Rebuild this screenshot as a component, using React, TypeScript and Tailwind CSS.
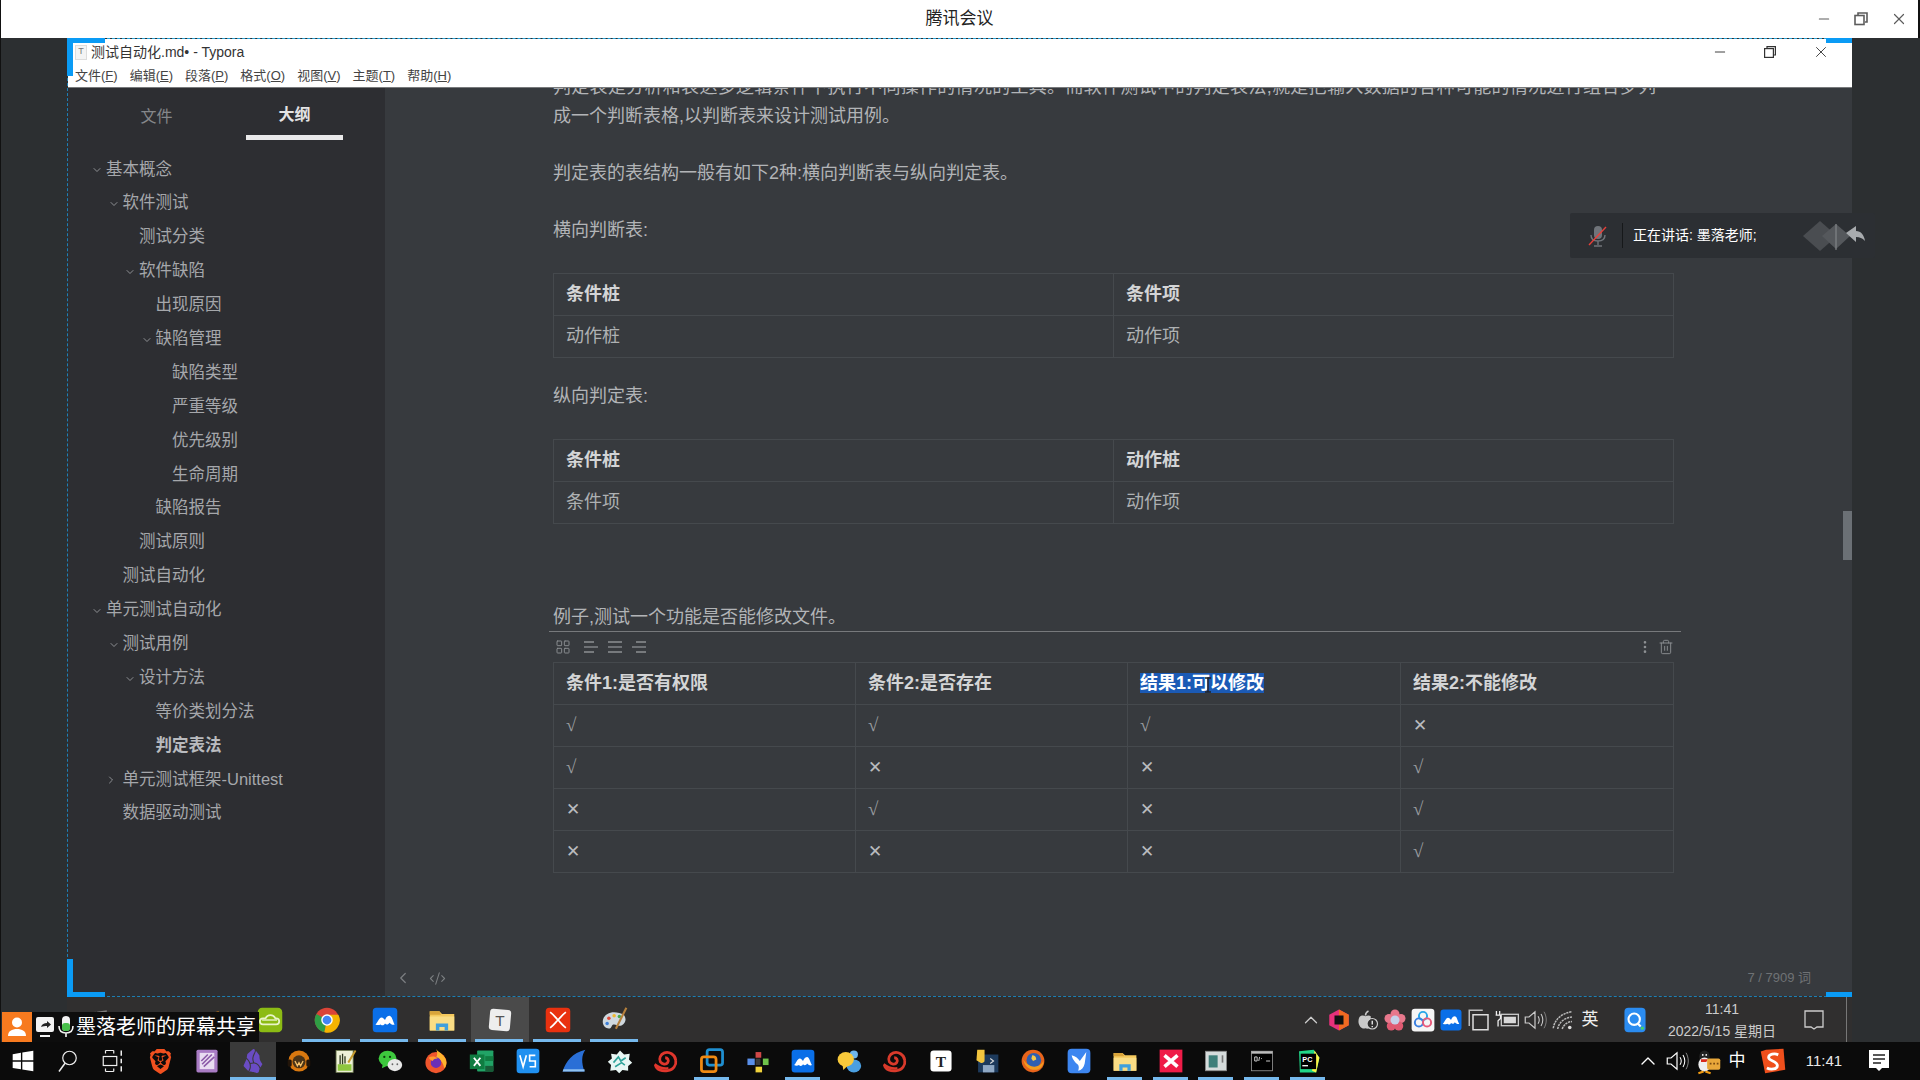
import { ChevronDown, ChevronLeft, ChevronRight, CodeXml, EllipsisVertical, LayoutGrid, Minus, Trash2, X } from 'lucide-react'
import { SiBrave, SiObsidian } from 'react-icons/si'
import type { ReactNode } from 'react'

const OUTLINE = [
  { label: '基本概念', level: 0, arrow: 'down' },
  { label: '软件测试', level: 1, arrow: 'down' },
  { label: '测试分类', level: 2 },
  { label: '软件缺陷', level: 2, arrow: 'down' },
  { label: '出现原因', level: 3 },
  { label: '缺陷管理', level: 3, arrow: 'down' },
  { label: '缺陷类型', level: 4 },
  { label: '严重等级', level: 4 },
  { label: '优先级别', level: 4 },
  { label: '生命周期', level: 4 },
  { label: '缺陷报告', level: 3 },
  { label: '测试原则', level: 2 },
  { label: '测试自动化', level: 1 },
  { label: '单元测试自动化', level: 0, arrow: 'down' },
  { label: '测试用例', level: 1, arrow: 'down' },
  { label: '设计方法', level: 2, arrow: 'down' },
  { label: '等价类划分法', level: 3 },
  { label: '判定表法', level: 3, active: true },
  { label: '单元测试框架-Unittest', level: 1, arrow: 'right' },
  { label: '数据驱动测试', level: 1 },
]

const MENU = [
  ['文件(', 'F', ')'],
  ['编辑(', 'E', ')'],
  ['段落(', 'P', ')'],
  ['格式(', 'O', ')'],
  ['视图(', 'V', ')'],
  ['主题(', 'T', ')'],
  ['帮助(', 'H', ')'],
]

const Svg = ({ size = 26, children }: { size?: number; children: ReactNode }) => (
  <svg width={size} height={size} viewBox="0 0 32 32" fill="none">
    {children}
  </svg>
)

const WinLogo = () => (
  <Svg size={22}>
    <path d="M1 6l12-2v11H1zM15 3.6L31 1v14H15zM1 17h12v11L1 26zM15 17h16v14l-16-2.6z" fill="#fff" />
  </Svg>
)
const SearchIcon = () => (
  <Svg size={24}>
    <circle cx="18" cy="12" r="9" stroke="#eee" strokeWidth="1.6" />
    <path d="M12 19L4 30" stroke="#eee" strokeWidth="2" />
  </Svg>
)
const TaskView = () => (
  <Svg size={24}>
    <path d="M6 2v4M17 2v4M6 26v4M17 26v4M6 2h11M6 30h11" stroke="#eee" strokeWidth="1.6" />
    <rect x="3" y="10" width="18" height="12" stroke="#eee" strokeWidth="1.6" />
    <path d="M27 2v7M27 13v6M27 23v7" stroke="#eee" strokeWidth="2" />
  </Svg>
)
const PurpleDoc = () => (
  <Svg>
    <rect x="3" y="2" width="26" height="28" rx="2" fill="#a97cc4" />
    <rect x="7" y="6" width="18" height="20" fill="#e9dcf1" />
    <path d="M10 20L22 8M12 23L25 11M9 16l8-8" stroke="#8c5aa8" strokeWidth="2" />
  </Svg>
)
const Headset = () => (
  <Svg>
    <circle cx="16" cy="16" r="13" fill="#d9780f" />
    <circle cx="16" cy="17" r="8" fill="#4a3418" />
    <path d="M11 16l3 6 2-4 2 4 3-6" stroke="#f6c26b" strokeWidth="1.6" />
    <rect x="2" y="14" width="5" height="9" rx="2" fill="#22150a" />
    <rect x="25" y="14" width="5" height="9" rx="2" fill="#22150a" />
  </Svg>
)
const Notepad = () => (
  <Svg>
    <rect x="5" y="3" width="21" height="27" fill="#eef2d8" stroke="#6e7a50" />
    <rect x="7" y="20" width="17" height="8" fill="#8ec63f" />
    <path d="M10 9v11M13 7v13M16 10v9" stroke="#2f3a20" strokeWidth="1.6" />
    <path d="M20 18L29 3" stroke="#c59a2d" strokeWidth="2.4" />
  </Svg>
)
const WeChat = () => (
  <Svg>
    <ellipse cx="13" cy="13" rx="11" ry="9.5" fill="#3dc83d" />
    <path d="M7 20l-1 5 6-3z" fill="#3dc83d" />
    <ellipse cx="22" cy="21" rx="9" ry="7.5" fill="#e8e8e8" />
    <circle cx="9" cy="11" r="1.4" fill="#0b3d0b" />
    <circle cx="16" cy="11" r="1.4" fill="#0b3d0b" />
    <circle cx="19" cy="20" r="1.1" fill="#666" />
    <circle cx="25" cy="20" r="1.1" fill="#666" />
  </Svg>
)
const Firefox = () => (
  <Svg>
    <circle cx="16" cy="18" r="13" fill="#f0562d" />
    <path d="M16 1c2 4 9 6 12 13 2 5 0 9-2 11-1-8-5-11-10-13 2-3 2-7 0-11z" fill="#ffb52e" />
    <circle cx="16" cy="18" r="6.5" fill="#6b2fb8" />
    <path d="M7 12c3-2 8-2 11 1-3 0-5 1-6 3-2-1-4-2-5-4z" fill="#ff9a2e" />
  </Svg>
)
const FirefoxOld = () => (
  <Svg>
    <circle cx="16" cy="16" r="14" fill="#e8641b" />
    <circle cx="17" cy="15" r="9" fill="#2f5fb0" />
    <path d="M4 14c2 10 10 15 19 12 4-2 6-6 6-10-4 7-12 9-18 5-3-2-5-4-7-7z" fill="#f29c1f" />
    <path d="M15 9c3 0 5 2 5 5l-4 2-2-3z" fill="#f7c948" />
  </Svg>
)
const Excel = () => (
  <Svg>
    <rect x="10" y="3" width="20" height="26" rx="1" fill="#21a366" />
    <rect x="20" y="10" width="10" height="6" fill="#107c41" />
    <rect x="20" y="22" width="10" height="7" fill="#185c37" />
    <rect x="1" y="8" width="18" height="18" fill="#107c41" />
    <path d="M6 12l8 10M14 12l-8 10" stroke="#fff" strokeWidth="2.2" />
  </Svg>
)
const VsBox = () => (
  <Svg>
    <rect x="2" y="1" width="28" height="30" rx="4" fill="#2090f0" />
    <path d="M6 9l4 14 4-14" stroke="#fff" strokeWidth="2" />
    <path d="M25 9h-7v7h7v7h-7" stroke="#fff" strokeWidth="2" />
  </Svg>
)
const Fin = () => (
  <Svg>
    <path d="M2 29C6 16 14 6 30 2c-5 7-5 16-1 27z" fill="#2a6fd6" />
    <path d="M2 29h27v-3H3z" fill="#8fc1f0" />
  </Svg>
)
const Flower = () => (
  <Svg>
    <path d="M16 3l5 5 7-1-1 7 4 4-5 4 0 6-7-1-4 4-4-4-7 1 1-7-4-4 5-4-1-6 7 1z" fill="#e8f6f4" />
    <path d="M8 18l6-7 3 5 6-4M10 23l8-5 4 3" stroke="#2fa39a" strokeWidth="2" />
  </Svg>
)
const Snail = ({ color = '#e0362c' }: { color?: string }) => (
  <Svg>
    <path d="M3 21c1 6 8 8 15 7 7-1 11-7 10-13C27 8 20 4 14 6c-5 2-7 7-5 11 2 3 7 4 9 1 2-3 0-6-3-6" stroke={color} strokeWidth="3.4" />
    <path d="M2 20c5 4 11 6 17 5" stroke={color} strokeWidth="3" />
  </Svg>
)
const Vmware = () => (
  <Svg>
    <rect x="10" y="2" width="19" height="19" rx="3" stroke="#1f8fd0" strokeWidth="3.4" />
    <rect x="3" y="11" width="18" height="18" rx="3" stroke="#f08a12" strokeWidth="3.4" />
  </Svg>
)
const Pieces = () => (
  <Svg>
    <rect x="3" y="13" width="9" height="8" fill="#5a8fe8" />
    <rect x="13" y="5" width="7" height="7" fill="#d04848" />
    <rect x="22" y="13" width="7" height="8" fill="#6fc24a" />
    <rect x="13" y="23" width="8" height="7" fill="#f0d23c" />
    <path d="M13 13l6 0 0 8-6 0z" fill="#3a3a3a" />
  </Svg>
)
const Bubbles = () => (
  <Svg>
    <circle cx="22" cy="8" r="5" fill="#6fb6ea" />
    <ellipse cx="22" cy="22" rx="9" ry="8" fill="#4a9fe0" />
    <ellipse cx="12" cy="14" rx="10" ry="9" fill="#f8c93a" />
    <path d="M8 21l1 6 5-5z" fill="#f8c93a" />
  </Svg>
)
const PyDisk = () => (
  <Svg>
    <rect x="5" y="8" width="25" height="22" fill="#1d3a5c" />
    <rect x="11" y="21" width="14" height="9" fill="#8fa8c4" />
    <path d="M4 2h9v13c0 3-3 4-5 3L3 15z" fill="#f2c53d" />
    <path d="M20 13l4 3-4 3" stroke="#ddd" strokeWidth="1.4" />
  </Svg>
)
const BirdBox = () => (
  <Svg>
    <rect x="2" y="1" width="28" height="30" rx="5" fill="#3d86f0" />
    <path d="M7 9c5 1 8 4 10 7l8-11-2 14c-1 5-4 8-8 9 1-3 1-5 0-7-3-3-7-6-8-12z" fill="#fff" />
  </Svg>
)
const RedX = () => (
  <Svg>
    <rect x="2" y="2" width="28" height="28" fill="#ef1c48" />
    <path d="M8 9l16 14M24 9L8 23" stroke="#fff" strokeWidth="4.4" />
  </Svg>
)
const GreyWindow = () => (
  <Svg>
    <rect x="3" y="4" width="26" height="24" fill="#d6dcdc" stroke="#888" />
    <rect x="7" y="9" width="11" height="15" fill="#3f7f7a" />
    <rect x="23" y="9" width="2" height="9" fill="#777" />
  </Svg>
)
const Terminal = () => (
  <Svg>
    <rect x="3" y="4" width="26" height="24" fill="#000" stroke="#999" />
    <rect x="3" y="4" width="26" height="3" fill="#bbb" />
    <path d="M7 11h3v5H7zM13 11l-1 5M15 13h1M21 16h5" stroke="#ccc" strokeWidth="1.2" />
  </Svg>
)
const PyCharm = () => (
  <Svg>
    <path d="M5 4l18-2 7 10-4 18-20 0z" fill="#21d789" />
    <path d="M24 3l6 9-4 18-5-2z" fill="#fcf84a" />
    <rect x="7" y="7" width="19" height="19" fill="#000" />
    <text x="9" y="17" fill="#fff" fontSize="9" fontWeight="700" fontFamily="Liberation Sans">PC</text>
    <rect x="9" y="21" width="7" height="1.6" fill="#fff" />
  </Svg>
)
const Feishu = ({ size = 26 }: { size?: number }) => (
  <Svg size={size}>
    <rect x="2" y="2" width="28" height="28" rx="4" fill="#0a6fe8" />
    <path d="M5 21c2-1 4-8 7-8 2 0 3 2 4 3 1-2 2-5 5-5 3 0 4 7 6 10-2 1-4 0-6-2-1 2-3 3-5 1-1 2-3 3-5 1-2 1-4 1-6 0z" fill="#fff" />
  </Svg>
)
const Folder = ({ size = 26 }: { size?: number }) => (
  <Svg size={size}>
    <path d="M2 6h11l3 3h14v19H2z" fill="#f5c95d" />
    <path d="M2 6h11l2 4H2z" fill="#d9a43a" />
    <rect x="2" y="12" width="28" height="16" fill="#fadd85" />
    <path d="M9 28v-8h14v8h-4v-4h-6v4z" fill="#3f9fdc" />
  </Svg>
)
const TyporaT = ({ tilt = false }: { tilt?: boolean }) => (
  <Svg>
    <rect x="3" y="3" width="26" height="26" rx="4" fill={tilt ? '#eeeeee' : '#fff'} transform={tilt ? 'rotate(5 16 16)' : undefined} />
    <text x="16" y="23" textAnchor="middle" fontSize="19" fill={tilt ? '#555' : '#222'} fontWeight={tilt ? 400 : 700} fontFamily={tilt ? 'Liberation Sans' : 'Liberation Serif'}>T</text>
  </Svg>
)
const XMind = () => (
  <Svg size={28}>
    <rect x="2" y="2" width="28" height="28" rx="4" fill="#e9310f" />
    <path d="M7 7c4 3 6 6 9 9 3-3 5-6 9-9M7 25c4-3 6-6 9-9 3 3 5 6 9 9" stroke="#fff" strokeWidth="2" />
  </Svg>
)
const Palette = () => (
  <Svg size={28}>
    <path d="M15 7C7 7 2 12 2 18c0 6 6 9 9 7 2-2 1-4 4-4s5 3 9 1c5-3 5-8 2-12-3-2-7-3-11-3z" fill="#cfd8de" />
    <circle cx="9" cy="14" r="2" fill="#e04a3a" />
    <circle cx="15" cy="11" r="2" fill="#f0b82e" />
    <circle cx="21" cy="12" r="2" fill="#49a84d" />
    <circle cx="7" cy="20" r="2" fill="#3d7fd8" />
    <path d="M17 26L29 2" stroke="#b5803c" strokeWidth="2.4" />
  </Svg>
)
const GreenBox = () => (
  <Svg size={28}>
    <rect x="2" y="2" width="28" height="28" rx="5" fill="#8cbb14" />
    <path d="M8 21h15a3.5 3.5 0 0 0 0-7h-1a6 6 0 0 0-11 0h-3a3.5 3.5 0 0 0 0 7z" stroke="#e9f4c8" strokeWidth="2" />
    <path d="M7 16h17" stroke="#e9f4c8" strokeWidth="1.6" />
  </Svg>
)
const Chrome = () => (
  <Svg size={28}>
    <circle cx="16" cy="16" r="14" fill="#db4437" />
    <path d="M16 16L4 9a14 14 0 0 0 9 21z" fill="#2f9e44" />
    <path d="M16 16l-3 14A14 14 0 0 0 29 10H16z" fill="#f4b400" />
    <circle cx="16" cy="16" r="6.6" fill="#fff" />
    <circle cx="16" cy="16" r="5" fill="#4285f4" />
  </Svg>
)
const FaintWin = () => (
  <Svg size={24}>
    <path d="M3 7l11-2v10H3zM16 5l13-2v12H16zM3 17h11v10L3 25zM16 17h13v12l-13-2z" fill="#7c7c7c" />
  </Svg>
)
const FaintCat = () => (
  <Svg size={24}>
    <path d="M6 5l5 4h10l5-4v14c0 5-4 8-10 8S6 24 6 19z" fill="#6f8a80" />
  </Svg>
)
const FaintSub = () => (
  <Svg size={24}>
    <path d="M5 10l20-6v6l-14 5 14 5v6L5 30v-7l12-4-12-5z" fill="#b06a18" />
  </Svg>
)
const JbIcon = () => (
  <Svg size={24}>
    <path d="M16 2l13 7v14l-13 7-13-7V9z" fill="#e8317b" />
    <path d="M16 2l13 7v14l-13 7z" fill="#f26b21" />
    <rect x="10" y="10" width="12" height="12" fill="#111" />
  </Svg>
)
const AppleAlert = () => (
  <Svg size={24}>
    <path d="M6 12c3-3 6-2 8-1 2-1 5-2 7 0v14c-2 3-5 3-7 2-3 1-5 0-7-2-3-4-3-9-1-13z" fill="#c9c9c9" />
    <path d="M14 10c0-3 2-5 4-6" stroke="#c9c9c9" strokeWidth="2" />
    <circle cx="23" cy="21" r="7" fill="#2f2e2e" stroke="#cfcfcf" strokeWidth="1.6" />
    <path d="M23 17v5M23 24v1.6" stroke="#eee" strokeWidth="1.8" />
  </Svg>
)
const PinkFlower = () => (
  <Svg size={24}>
    <circle cx="16" cy="8" r="6" fill="#e8788c" />
    <circle cx="24" cy="14" r="6" fill="#e8788c" />
    <circle cx="21" cy="24" r="6" fill="#e05a72" />
    <circle cx="11" cy="24" r="6" fill="#e05a72" />
    <circle cx="8" cy="14" r="6" fill="#e8788c" />
    <circle cx="16" cy="16" r="6" fill="#c6d2ea" />
  </Svg>
)
const RingsBox = () => (
  <Svg size={26}>
    <rect x="2" y="2" width="28" height="28" rx="4" fill="#f5f5f5" />
    <circle cx="16" cy="11" r="5" stroke="#27a6e8" strokeWidth="2.4" />
    <circle cx="11" cy="19" r="5" stroke="#3a7fe0" strokeWidth="2.4" />
    <circle cx="21" cy="19" r="5" stroke="#e85a7a" strokeWidth="2.4" />
  </Svg>
)
const CopyIcon = () => (
  <Svg size={24}>
    <path d="M3 24V3h18" stroke="#bbb" strokeWidth="2" />
    <rect x="8" y="9" width="20" height="20" stroke="#ddd" strokeWidth="2" />
  </Svg>
)
const BatteryPlug = () => (
  <Svg size={26}>
    <rect x="9" y="9" width="21" height="14" stroke="#ccc" strokeWidth="1.6" />
    <rect x="12" y="12" width="15" height="8" fill="#d8d8d8" />
    <path d="M3 5v5M7 5v5M2 10h6v4l-3 3v7" stroke="#eee" strokeWidth="1.6" />
  </Svg>
)
const Speaker = ({ color = '#ccc' }: { color?: string }) => (
  <Svg size={24}>
    <path d="M3 12h5l8-7v22l-8-7H3z" stroke={color} strokeWidth="1.6" />
    <path d="M20 11c2 3 2 7 0 10M24 8c3 5 3 11 0 16" stroke={color} strokeWidth="1.4" />
    <path d="M28 5c4 7 4 15 0 22" stroke={color} strokeWidth="1.1" opacity="0.6" />
  </Svg>
)
const Wifi = () => (
  <Svg size={24}>
    <path d="M3 27C5 15 14 7 28 5M9 28c1-8 8-15 19-16M15 28c1-4 5-9 13-10" stroke="#bbb" strokeWidth="2" strokeDasharray="3 1" />
    <circle cx="25" cy="26" r="2.4" fill="#ddd" />
  </Svg>
)
const QBox = () => (
  <Svg size={26}>
    <rect x="3" y="1" width="26" height="30" rx="5" fill="#2b8cf0" />
    <circle cx="15" cy="15" r="7" stroke="#fff" strokeWidth="2.6" />
    <path d="M19 20l4 4" stroke="#fff" strokeWidth="2.6" />
    <circle cx="25" cy="26" r="2" fill="#45d16a" />
  </Svg>
)
const Penguin = () => (
  <Svg size={28}>
    <ellipse cx="12" cy="11" rx="6" ry="7" fill="#222" />
    <ellipse cx="12" cy="20" rx="7" ry="8" fill="#eee" />
    <path d="M8 14h8l-2 3H8z" fill="#d92a1c" />
    <path d="M5 30l6-2M19 30l-6-2" stroke="#f39c12" strokeWidth="2.4" />
    <circle cx="10" cy="9" r="1" fill="#fff" />
    <circle cx="14" cy="9" r="1" fill="#fff" />
    <rect x="15" y="13" width="15" height="13" rx="2" fill="#e8a73a" />
    <path d="M18 19h2M22 19h2M26 19h2" stroke="#7a4a10" strokeWidth="1.8" />
  </Svg>
)
const Sogou = () => (
  <Svg size={28}>
    <path d="M8 3l20-1 2 24-23 4-5-25z" fill="#ef4f1c" />
    <path d="M22 9c-4-2-11-1-11 3s10 4 10 9-8 5-12 3" stroke="#fff" strokeWidth="3.2" />
  </Svg>
)

const AlignLines = ({ kind }: { kind: 'left' | 'center' | 'right' }) => {
  const short = kind === 'left' ? 'M1 3h10M1 13h10' : kind === 'right' ? 'M5 3h10M5 13h10' : 'M1 3h14M1 13h14'
  return (
    <svg width="16" height="16" viewBox="0 0 16 16" fill="none" stroke="#8d9093" strokeWidth="1.3">
      <path d={short} />
      <path d="M1 8h14" />
    </svg>
  )
}

const TopControls = () => (
  <div className="flex items-center gap-[22px] pr-[10px] text-[#5c5c5c]">
    <Minus size={20} strokeWidth={1.6} className="w-[16px]" />
    <svg width="14" height="14" viewBox="0 0 14 14" fill="none" stroke="currentColor" strokeWidth="1.6">
      <rect x="1" y="3.5" width="9" height="9" />
      <path d="M4 3V1h9v9h-2" />
    </svg>
    <X size={18} strokeWidth={1.6} />
  </div>
)

const Cell = ({ children, head }: { children: ReactNode; head?: boolean }) => (
  <td className={`h-[42px] border border-[#45494d] px-[12px] py-0 text-[18px] ${head ? 'font-bold text-[#d4d5d6]' : 'text-[#aeb1b3]'}`}>
    {children}
  </td>
)

const SimpleTable = ({ rows }: { rows: string[][] }) => (
  <table className="w-full table-fixed border-collapse">
    <colgroup>
      <col className="w-[560px]" />
      <col />
    </colgroup>
    <tbody>
      {rows.map((row, i) => (
        <tr key={i}>
          {row.map((c) => (
            <Cell key={c} head={i === 0}>{c}</Cell>
          ))}
        </tr>
      ))}
    </tbody>
  </table>
)

const Yes = () => <span className="text-[19px] text-[#9a9da0] [font-family:'Liberation_Serif',serif]">√</span>
const No = () => <span className="text-[17px] font-bold text-[#b9bbbe] [font-family:'DejaVu_Sans',sans-serif]">✕</span>

const MATRIX = [
  [1, 1, 1, 0],
  [1, 0, 0, 1],
  [0, 1, 0, 1],
  [0, 0, 0, 1],
]

const SLOTS_TOP: { icon: ReactNode; run?: boolean; on?: boolean }[] = [
  { icon: <FaintWin /> },
  { icon: <FaintCat /> },
  { icon: <FaintSub /> },
  { icon: <GreenBox /> },
  { icon: <Chrome />, run: true },
  { icon: <Feishu size={28} />, run: true },
  { icon: <Folder size={28} />, run: true },
  { icon: <TyporaT tilt />, run: true, on: true },
  { icon: <XMind />, run: true },
  { icon: <Palette />, run: true },
]

const TRAY_TOP: ReactNode[] = [
  <ChevronDown key="a" size={22} strokeWidth={1.4} className="rotate-180 text-[#ccc]" />,
  <JbIcon key="b" />,
  <AppleAlert key="c" />,
  <PinkFlower key="d" />,
  <RingsBox key="e" />,
  <Feishu key="f" size={24} />,
  <CopyIcon key="g" />,
  <BatteryPlug key="h" />,
  <Speaker key="i" />,
  <Wifi key="j" />,
]

const SLOTS_BOTTOM: { icon: ReactNode; run?: boolean; on?: boolean }[] = [
  { icon: <SiBrave size={25} color="#f1501f" /> },
  { icon: <PurpleDoc /> },
  { icon: <SiObsidian size={24} color="#6a4cc4" />, run: true, on: true },
  { icon: <Headset /> },
  { icon: <Notepad /> },
  { icon: <WeChat /> },
  { icon: <Firefox /> },
  { icon: <Excel /> },
  { icon: <VsBox /> },
  { icon: <Fin /> },
  { icon: <Flower /> },
  { icon: <Snail /> },
  { icon: <Vmware />, run: true },
  { icon: <Pieces /> },
  { icon: <Feishu />, run: true },
  { icon: <Bubbles /> },
  { icon: <Snail color="#d93a2b" /> },
  { icon: <TyporaT /> },
  { icon: <PyDisk /> },
  { icon: <FirefoxOld /> },
  { icon: <BirdBox /> },
  { icon: <Folder />, run: true },
  { icon: <RedX />, run: true },
  { icon: <GreyWindow />, run: true },
  { icon: <Terminal />, run: true },
  { icon: <PyCharm />, run: true },
]

export default function App() {
  return (
    <div className="relative flex h-[1080px] w-[1920px] flex-col overflow-hidden bg-[#2c2f31] [font-family:'Liberation_Sans','Noto_Sans_CJK_SC',sans-serif]">
      {/* Meeting title bar */}
      <header className="flex h-[38px] shrink-0 items-center border-l border-r-2 border-[#111] bg-white">
        <div className="flex-1" />
        <h1 className="text-[17px] text-[#222]">腾讯会议</h1>
        <div className="flex flex-1 justify-end">
          <TopControls />
        </div>
      </header>

      <main className="flex h-[1004px] shrink-0 flex-col border-l border-[#111] pl-[66px]">
        {/* Shared Typora window */}
        <section className="relative flex h-[959px] w-[1785px] flex-col border-b border-l border-t border-b-[#1c7fb5] border-l-[#1c7fb5] border-t-[#2aa5dc] [border-style:dashed]">
          <div className="flex h-[49px] shrink-0 flex-col border-b border-[#77797b] bg-white">
            <div className="flex h-[27px] items-center">
              <div className="ml-[7px] flex h-[15px] w-[12px] items-center justify-center border border-[#ddd] bg-[#f4f4f4] text-[9px] text-[#777]">T</div>
              <span className="ml-[4px] text-[14px] text-[#333]">测试自动化.md• - Typora</span>
              <div className="ml-auto flex items-center gap-[36px] pr-[22px] text-[#333]">
                <Minus size={16} strokeWidth={1.4} />
                <svg width="12" height="12" viewBox="0 0 12 12" fill="none" stroke="currentColor" strokeWidth="1.2">
                  <rect x="0.6" y="2.6" width="8.8" height="8.8" />
                  <path d="M3 2.4V0.6h8.4V9H9.6" />
                </svg>
                <X size={18} strokeWidth={1.2} />
              </div>
            </div>
            <nav className="flex h-[22px] items-center gap-[12px] pl-[7px] text-[13px] text-[#444]">
              {MENU.map(([a, b, c]) => (
                <span key={a}>
                  {a}
                  <u>{b}</u>
                  {c}
                </span>
              ))}
            </nav>
          </div>

          <div className="flex min-h-0 flex-1">
            {/* Outline sidebar */}
            <aside className="w-[317px] shrink-0 bg-[#2d2e32]">
              <div className="flex gap-[41px] pl-[40px]">
                <div className="flex h-[52px] w-[97px] items-center justify-center pt-[6px] text-[16px] text-[#85878a]">文件</div>
                <div className="flex h-[52px] w-[97px] items-center justify-center border-b-[5px] border-[#e9e9ea] pt-[6px] text-[16px] font-bold text-[#e3e3e4]">大纲</div>
              </div>
              <ul className="mt-[12px]">
                {OUTLINE.map((item) => (
                  <li
                    key={item.label}
                    className={`flex h-[33.9px] items-center text-[16.5px] ${item.active ? 'font-bold text-[#b9bbbf]' : 'text-[#a5a7ab]'}`}
                    style={{ paddingLeft: 38 + item.level * 16.5 }}
                  >
                    {item.arrow === 'down' && <ChevronDown size={12} strokeWidth={1.6} className="-ml-[15px] mr-[3px] mt-[3px]" />}
                    {item.arrow === 'right' && <ChevronRight size={12} strokeWidth={1.6} className="-ml-[18px] mr-[6px] mt-[3px]" />}
                    {item.label}
                  </li>
                ))}
              </ul>
            </aside>

            {/* Editor */}
            <div className="flex min-w-0 flex-1 flex-col bg-[#373a3e]">
              <div className="relative min-h-0 flex-1 overflow-hidden">
                <article className="-mt-[15px] ml-[168px] w-[1121px] text-[18px] leading-[28.8px] text-[#b2b4b7]">
                  <p className="whitespace-nowrap tracking-[0.3px]">判定表是分析和表达多逻辑条件下执行不同操作的情况的工具。而软件测试中的判定表法,就是把输入数据的各种可能的情况进行组合罗列</p>
                  <p>成一个判断表格,以判断表来设计测试用例。</p>
                  <p className="mt-[28px]">判定表的表结构一般有如下2种:横向判断表与纵向判定表。</p>
                  <p className="mt-[28.8px]">横向判断表:</p>
                  <div className="mt-[28px]">
                    <SimpleTable rows={[['条件桩', '条件项'], ['动作桩', '动作项']]} />
                  </div>
                  <p className="mt-[24px]">纵向判定表:</p>
                  <div className="mt-[28px]">
                    <SimpleTable rows={[['条件桩', '动作桩'], ['条件项', '动作项']]} />
                  </div>
                  <p className="mt-[79px] h-[28px]">例子,测试一个功能是否能修改文件。</p>
                  <div className="-ml-[4px] -mr-[7px] flex h-[31px] items-center border-t border-[#77797c] pl-[6px] pr-[7px] text-[#8d9093]">
                    <LayoutGrid size={16} strokeWidth={1.4} className="mr-[12px]" />
                    <div className="flex gap-[8px]">
                      <AlignLines kind="left" />
                      <AlignLines kind="center" />
                      <AlignLines kind="right" />
                    </div>
                    <EllipsisVertical size={16} strokeWidth={2} className="ml-auto mr-[5px]" />
                    <Trash2 size={16} strokeWidth={1.4} />
                  </div>
                  <table className="w-full table-fixed border-collapse">
                    <colgroup>
                      <col className="w-[302px]" />
                      <col className="w-[272px]" />
                      <col className="w-[273px]" />
                      <col />
                    </colgroup>
                    <tbody>
                      <tr>
                        <Cell head>条件1:是否有权限</Cell>
                        <Cell head>条件2:是否存在</Cell>
                        <Cell head>
                          <span className="relative inline-block h-[20px] bg-[#1b5ab5] leading-[20px] text-white">
                            结果1:可以修改
                            {/* text cursor over the selection */}
                            <svg className="absolute left-[64px] top-[4px]" width="8" height="16" viewBox="0 0 8 16" fill="none" stroke="#222" strokeWidth="1.4">
                              <path d="M1 1h6M4 1v14M1 15h6" />
                            </svg>
                          </span>
                        </Cell>
                        <Cell head>结果2:不能修改</Cell>
                      </tr>
                      {MATRIX.map((row, i) => (
                        <tr key={i}>
                          {row.map((v, j) => (
                            <Cell key={j}>{v ? <Yes /> : <No />}</Cell>
                          ))}
                        </tr>
                      ))}
                    </tbody>
                  </table>
                </article>
                {/* scrollbar thumb */}
                <div className="absolute right-0 top-[423px] h-[49px] w-[9px] bg-[#6b7075]" />
              </div>
              <footer className="flex h-[36px] shrink-0 items-center pl-[9px] pr-[41px] text-[#7c7f82]">
                <ChevronLeft size={18} strokeWidth={1.6} />
                <CodeXml size={17} strokeWidth={1.5} className="ml-[17px]" />
                <span className="ml-auto text-[13px] text-[#6f7275]">7 / 7909 词</span>
              </footer>
            </div>
          </div>

          {/* capture corner brackets */}
          <div className="absolute -left-px -top-px h-[38px] w-[6px] bg-[#0a9bf5]" />
          <div className="absolute -left-px -top-px h-[5px] w-[38px] bg-[#0a9bf5]" />
          <div className="absolute -right-0 -top-px h-[5px] w-[26px] bg-[#0a9bf5]" />
          <div className="absolute -bottom-px -left-px h-[38px] w-[6px] bg-[#0a9bf5]" />
          <div className="absolute -bottom-px -left-px h-[5px] w-[38px] bg-[#0a9bf5]" />
          <div className="absolute -bottom-px right-0 h-[5px] w-[26px] bg-[#0a9bf5]" />
        </section>

        {/* Remote desktop taskbar inside the shared screen */}
        <div className="flex h-[45px] w-[1785px] items-stretch bg-[#302f2f] pl-px">
          {SLOTS_TOP.map((s, i) => (
            <div key={i} className={`relative flex w-[57.6px] items-center justify-center ${s.on ? 'bg-[#4a4a4a]' : ''}`}>
              {s.icon}
              {s.run && <div className="absolute bottom-0 left-[4px] h-[3px] w-[48px] bg-[#76b9ed]" />}
            </div>
          ))}
          <div className="ml-auto flex items-center pr-[5px]">
            {TRAY_TOP.map((icon, i) => (
              <div key={i} className="flex w-[28px] items-center justify-center">{icon}</div>
            ))}
            <div className="flex w-[26px] justify-center text-[17px] text-[#eee]">英</div>
            <div className="ml-[19px] flex w-[26px] justify-center"><QBox /></div>
            <div className="ml-[12px] flex w-[124px] flex-col items-center text-[14px] leading-[22px] text-[#ccc]">
              <span>11:41</span>
              <span className="whitespace-nowrap">2022/5/15 星期日</span>
            </div>
            <div className="ml-[14px] flex w-[32px] justify-center">
              <svg width="22" height="22" viewBox="0 0 22 22" fill="none" stroke="#ccc" strokeWidth="1.3">
                <path d="M2 2h18v16h-6l-3 2-3-2H2z" />
              </svg>
            </div>
            <div className="ml-[16px] h-[45px] w-px bg-[#777]" />
          </div>
        </div>
      </main>

      {/* Windows taskbar */}
      <footer className="flex h-[38px] shrink-0 items-stretch bg-[#0b0b0b]">
        <div className="flex w-[45px] items-center justify-center"><WinLogo /></div>
        <div className="flex w-[45px] items-center justify-center"><SearchIcon /></div>
        <div className="mr-[3px] flex w-[45px] items-center justify-center"><TaskView /></div>
        {SLOTS_BOTTOM.map((s, i) => (
          <div key={i} className={`relative flex w-[45.9px] items-center justify-center ${s.on ? 'bg-[#3a3a3a]' : ''}`}>
            {s.icon}
            {s.run && <div className={`absolute bottom-0 h-[3px] bg-[#76b9ed] ${s.on ? 'left-0 w-full' : 'left-[5px] w-[35px]'}`} />}
          </div>
        ))}
        <div className="ml-auto flex items-center">
          <div className="flex w-[28px] justify-center">
            <ChevronDown size={24} strokeWidth={1.4} className="rotate-180 text-white" />
          </div>
          <div className="flex w-[30px] justify-center"><Speaker color="#fff" /></div>
          <div className="flex w-[32px] justify-center"><Penguin /></div>
          <div className="flex w-[26px] justify-center text-[17px] text-white">中</div>
          <div className="flex w-[46px] justify-center"><Sogou /></div>
          <div className="flex w-[56px] justify-center text-[15px] text-[#e8e8e8]">11:41</div>
          <div className="flex w-[68px] justify-center pr-[14px]">
            <svg width="22" height="24" viewBox="0 0 22 24" fill="#fff">
              <path d="M1 1h20v18h-7l-3 3-3-3H1z" />
              <path d="M5 6h12M5 10h12M5 14h8" stroke="#222" strokeWidth="1.3" />
            </svg>
          </div>
        </div>
      </footer>

      {/* Speaker indicator floating over the share */}
      <div className="absolute left-[1570px] top-[213px] flex h-[45px] w-[305px] items-center rounded-[2px] bg-[#2c2f33]">
        <div className="relative ml-[16px] flex w-[24px] justify-center">
          <svg width="22" height="24" viewBox="0 0 22 24" fill="none">
            <rect x="7" y="2" width="8" height="13" rx="4" fill="#70747a" />
            <path d="M4 11c0 4 3 6 7 6s7-2 7-6M11 17v4M7 22h8" stroke="#70747a" strokeWidth="1.4" />
            <path d="M2 21L19 3" stroke="#e8403a" strokeWidth="1.4" />
          </svg>
        </div>
        <div className="ml-[12px] h-[25px] w-px bg-[#16181a]" />
        <span className="ml-[10px] text-[14px] text-white">正在讲话: 墨落老师;</span>
        <div className="relative ml-auto mr-[10px] h-[30px] w-[62px]">
          <svg width="62" height="30" viewBox="0 0 62 30" fill="none">
            <path d="M0 15L17 0l17 15-17 15z" fill="#4a4d51" />
            <path d="M19 15L33 3l14 12-14 13z" fill="#55585c" />
            <path d="M33 3v26" stroke="#8a8d90" />
            <path d="M43 12l10-7v5c5 0 8 4 9 10-3-3-5-4-9-4v5z" fill="#a8abae" />
          </svg>
        </div>
      </div>

      {/* Screen share label */}
      <div className="absolute left-[2px] top-[1012px] flex h-[30px] w-[257px] items-center bg-[#0d0d0d]">
        <div className="flex h-full w-[30px] items-center justify-center bg-[#f77a1f]">
          <svg width="20" height="22" viewBox="0 0 20 22" fill="#fff">
            <circle cx="10" cy="6.5" r="5" />
            <path d="M1 20c0-5 4-7 9-7s9 2 9 7z" />
          </svg>
        </div>
        <svg className="ml-[3px]" width="20" height="24" viewBox="0 0 20 24" fill="none">
          <rect x="1" y="2" width="18" height="15" rx="2" fill="#f3f3f3" />
          <path d="M6 12c1-3 3-4 6-4V6l4 3.5-4 3.5v-2c-2 0-4 0-6 1z" fill="#222" />
          <path d="M5 21h10" stroke="#f3f3f3" strokeWidth="2" />
        </svg>
        <svg className="ml-[3px]" width="16" height="24" viewBox="0 0 16 24" fill="none">
          <rect x="4" y="1" width="8" height="15" rx="4" fill="#f3f3f3" />
          <rect x="4" y="8" width="8" height="8" rx="3" fill="#48c04a" />
          <path d="M1 11c0 5 3 7 7 7s7-2 7-7M8 18v4" stroke="#f3f3f3" strokeWidth="1.6" />
        </svg>
        <span className="ml-[2px] whitespace-nowrap text-[20px] text-white">墨落老师的屏幕共享</span>
      </div>
    </div>
  )
}
